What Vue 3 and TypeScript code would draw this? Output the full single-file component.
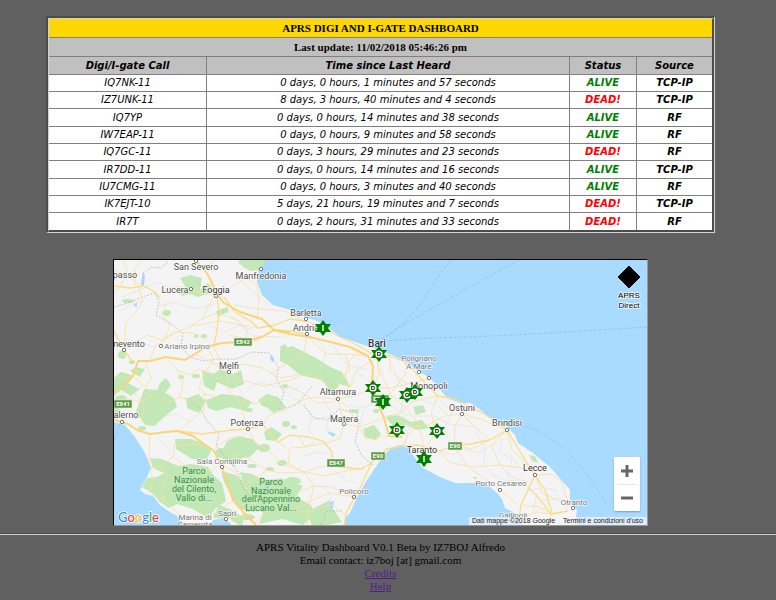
<script setup lang="ts">
import { ref } from 'vue'

interface Station {
  call: string
  heard: string
  alive: boolean
  source: 'TCP-IP' | 'RF'
}

interface Place {
  name: string
  x: number
  y: number
  dot?: [number, number]
  kind?: 'city' | 'capital' | 'minor' | 'park'
}

const stations: Station[] = [
  { call: 'IQ7NK-11', heard: '0 days, 0 hours, 1 minutes and 57 seconds', alive: true, source: 'TCP-IP' },
  { call: 'IZ7UNK-11', heard: '8 days, 3 hours, 40 minutes and 4 seconds', alive: false, source: 'TCP-IP' },
  { call: 'IQ7YP', heard: '0 days, 0 hours, 14 minutes and 38 seconds', alive: true, source: 'RF' },
  { call: 'IW7EAP-11', heard: '0 days, 0 hours, 9 minutes and 58 seconds', alive: true, source: 'RF' },
  { call: 'IQ7GC-11', heard: '0 days, 3 hours, 29 minutes and 23 seconds', alive: false, source: 'RF' },
  { call: 'IR7DD-11', heard: '0 days, 0 hours, 14 minutes and 16 seconds', alive: true, source: 'TCP-IP' },
  { call: 'IU7CMG-11', heard: '0 days, 0 hours, 3 minutes and 40 seconds', alive: true, source: 'RF' },
  { call: 'IK7EJT-10', heard: '5 days, 21 hours, 19 minutes and 7 seconds', alive: false, source: 'TCP-IP' },
  { call: 'IR7T', heard: '0 days, 2 hours, 31 minutes and 33 seconds', alive: false, source: 'RF' },
]

const places: Place[] = [
  { name: 'San Severo', x: 196, y: 270, dot: [196, 261] },
  { name: 'Manfredonia', x: 261, y: 279, dot: [261, 269] },
  { name: 'passo', x: 125, y: 278 },
  { name: 'Lucera', x: 175, y: 293, dot: [191, 289] },
  { name: 'Foggia', x: 216, y: 293, dot: [216, 296], kind: 'city' },
  { name: 'nevento', x: 129, y: 347, dot: [124, 350] },
  { name: 'Ariano Irpino', x: 187, y: 349, dot: [161, 346], kind: 'minor' },
  { name: 'Melfi', x: 229, y: 369, dot: [229, 372] },
  { name: 'Barletta', x: 306, y: 316, dot: [306, 319] },
  { name: 'Andria', x: 306, y: 331, dot: [307, 334] },
  { name: 'Bari', x: 377, y: 347, kind: 'capital' },
  { name: 'Polignano', x: 419, y: 361, kind: 'minor' },
  { name: 'A Mare', x: 419, y: 369, dot: [419, 372], kind: 'minor' },
  { name: 'Monopoli', x: 429, y: 389, dot: [429, 378] },
  { name: 'Altamura', x: 338, y: 395, dot: [338, 399] },
  { name: 'Matera', x: 344, y: 422, dot: [344, 424] },
  { name: 'Ostuni', x: 462, y: 411, dot: [462, 414] },
  { name: 'Brindisi', x: 507, y: 426, dot: [507, 430] },
  { name: 'Taranto', x: 422, y: 453, kind: 'city' },
  { name: 'Lecce', x: 535, y: 471, dot: [535, 475], kind: 'city' },
  { name: 'Porto Cesareo', x: 501, y: 486, dot: [500, 490], kind: 'minor' },
  { name: 'Otranto', x: 574, y: 505, dot: [573, 508], kind: 'minor' },
  { name: 'Gallipoli', x: 513, y: 518, kind: 'minor' },
  { name: 'alerno', x: 126, y: 418, dot: [122, 422] },
  { name: 'Potenza', x: 247, y: 426, dot: [248, 429] },
  { name: 'Sala Consilina', x: 222, y: 464, dot: [222, 467], kind: 'minor' },
  { name: 'Policoro', x: 354, y: 494, dot: [354, 497], kind: 'minor' },
  { name: 'Sapri', x: 227, y: 516, dot: [226, 519], kind: 'minor' },
  { name: 'Marina di', x: 195, y: 520, kind: 'minor' },
  { name: 'Camerota', x: 195, y: 527, kind: 'minor' },
  { name: 'Parco', x: 194, y: 474, kind: 'park' },
  { name: 'Nazionale', x: 194, y: 483, kind: 'park' },
  { name: 'del Cilento,', x: 194, y: 492, kind: 'park' },
  { name: 'Vallo di...', x: 194, y: 501, kind: 'park' },
  { name: 'Parco', x: 271, y: 485, kind: 'park' },
  { name: 'Nazionale', x: 271, y: 494, kind: 'park' },
  { name: "dell'Appennino", x: 271, y: 502, kind: 'park' },
  { name: 'Lucano Val...', x: 271, y: 511, kind: 'park' },
]

const shields = [
  { name: 'E842', x: 243, y: 342 },
  { name: 'E841', x: 123, y: 404 },
  { name: 'E843', x: 380, y: 399 },
  { name: 'E90', x: 378, y: 456 },
  { name: 'E90', x: 455, y: 446 },
  { name: 'E847', x: 336, y: 463 },
]

const markers = [
  { letter: 'I', x: 323, y: 328 },
  { letter: 'D', x: 379, y: 354 },
  { letter: 'D', x: 373, y: 388 },
  { letter: 'I', x: 383, y: 402 },
  { letter: 'C', x: 407, y: 395 },
  { letter: 'D', x: 415, y: 392 },
  { letter: 'D', x: 397, y: 430 },
  { letter: 'D', x: 437, y: 431 },
  { letter: 'I', x: 424, y: 459 },
]

const motorways = [
  'M194 260C202 266 207 272 210 279L217 294L224 303L240 312L262 319L274 330L290 334L310 337L330 342L350 347L368 356L373 366L372 384L378 404L384 418L389 436L402 437',
  'M114 392L125 385L133 376L138 361L150 361L166 357L185 360L195 354L206 347L222 343L243 342L262 337L274 330L290 332',
  'M114 420L128 424L137 430L150 434L166 432L178 431L193 436L204 444L214 451L221 464L227 482L233 500L246 515L256 525',
]
const trunks = [
  'M217 294L219 313L217 330L214 346', 'M224 297L235 312L252 322L258 328L275 325L290 319L305 321L322 327L340 337L361 347L374 355L390 356L403 361L414 371L425 383L438 396L455 399L473 408L491 418L507 430',
  'M114 331L124 350L132 361', 'M178 431L202 434L217 432L232 430L248 429L263 425L278 442L290 435L298 436L309 437L323 441L332 452L333 465L341 467L360 469L370 464',
  'M344 527L346 513L359 490L372 462L387 449L402 446L418 445L439 451L457 445L470 444L490 440L507 430L518 448L527 463L535 475',
  'M535 475L528 490L521 505L519 519', 'M528 487L538 497L551 514L568 511', 'M114 286L130 288L144 286L155 292L160 298',
  'M307 334L290 331L278 332', 'M535 475L545 490L552 512',
]
const roads = [
  'M114 271L128 275L138 284L143 301L137 310L126 323L124 350', 'M114 293L122 284L127 270L124 260', 'M135 285L135 269L143 260',
  'M191 289L175 286L160 292M216 296L200 292L191 289', 'M211 302L202 319L191 326L175 333L163 340L147 335L124 350',
  'M216 296L235 285L247 278L257 285L259 300L257 320', 'M194 260L203 269L216 260', 'M234 305L260 309L285 311L306 322',
  'M191 326L220 321L258 328M202 319L217 313', 'M150 360L155 347L163 340L174 332L193 333L207 340',
  'M145 361L151 378L146 386L151 397L166 404L180 397L191 401L206 394L217 397', 'M166 357L177 370L183 382L180 397',
  'M195 354L210 362L229 372L241 380L264 386L290 380L309 373', 'M214 346L220 361L229 372L227 388L239 401L248 429',
  'M229 372L242 364L262 368L280 378L298 375', 'M177 370L190 375L199 369L212 375L227 383',
  'M206 347L214 359L204 374L199 388L206 394L204 410L182 428', 'M229 335L257 341L262 337', 'M114 377L130 379L138 371',
  'M114 404L126 398L140 402L151 397', 'M133 376L143 385L135 394L144 405L142 422', 'M248 429L242 437L230 438L216 446',
  'M248 429L255 442L269 451L280 463L304 472L314 486L310 501L293 511L273 506L264 514',
  'M226 452L244 456L267 470L281 473L304 472', 'M263 425L269 415L286 410L299 401L315 397L338 399',
  'M239 401L255 404L268 398L286 410', 'M286 385L303 393L316 403L333 402L350 387L357 370L373 360', 'M338 399L357 395L373 388L379 374L377 360',
  'M338 399L344 424L360 427L384 418M344 424L340 439L325 443', 'M309 373L326 384L338 399L349 408L357 424L366 439L389 436',
  'M307 334L315 344L326 354L345 354L368 356M307 334L304 352L285 365L270 374', 'M345 354L350 370L338 382L338 399',
  'M377 362L384 380L390 394L407 409L418 423L424 446', 'M373 388L390 388L407 384L429 378', 'M384 418L400 413L412 402L428 398L438 396',
  'M438 396L431 413L437 432L427 446', 'M397 420L412 427L428 425L444 416L462 414', 'M462 414L455 427L454 445',
  'M462 414L475 427L490 440M462 414L480 419L507 430', 'M390 394L405 375L407 362', 'M402 446L408 435L418 423',
  'M439 451L450 463L475 467L500 465L535 470', 'M454 446L468 467L487 480L500 490L518 505', 'M500 465L512 477L528 482',
  'M507 430L512 450L522 459L535 475M535 475L551 474L562 482L566 497L573 508', 'M535 475L542 493L556 499L568 509M519 519L537 512L552 514',
  'M507 430L491 445L500 465M490 440L472 449L455 445', 'M522 505L539 507L551 513L548 525',
  'M290 448L305 447L314 442M304 472L319 467L333 465M304 472L325 476L350 470L365 469', 'M310 501L330 493L354 497L346 513M307 527L310 501M292 511L307 512L332 505L345 514',
  'M354 497L332 487L314 486L297 493', 'M150 434L149 460L151 468L162 466L174 456L174 445L204 444', 'M151 468L153 482L149 492L165 501L174 510L186 519L214 514L233 500',
  'M174 457L187 467L193 473L213 470L221 464', 'M162 466L167 479L161 489L165 501M214 514L221 522L226 519L246 515', 'M254 525L263 514L256 502L236 506',
  'M222 464L235 472L245 485L256 502M245 485L267 470', 'M278 442L290 450L288 463L304 472M299 436L305 447L325 443',
  'M164 340L170 326L162 315L167 303M219 313L239 321L247 330L246 341', 'M362 347L350 360L345 375L350 387M390 356L390 371L407 384',
]
const greens = [
  'M180 278L190 275L202 278L200 290L208 283L213 289L208 294L198 297L190 294L182 296L176 289L187 289Z', 'M246 255L281 255L266 267L260 270L251 271L243 267L238 262Z',
  'M280 350L292 346L304 352L316 358L330 367L342 372L350 387L340 384L332 394L322 380L300 375L288 365L280 361Z',
  'M114 378L121 372L132 375L128 383L139 389L131 396L121 390L114 396Z', 'M136 367L145 369L140 377L130 371Z',
  'M144 389L161 390L174 398L177 407L165 416L154 426L145 425L136 411L140 401Z', 'M160 383L166 378L171 385L166 392L157 391Z',
  'M202 370L214 374L220 369L233 374L241 370L244 384L232 389L217 382L214 391L204 386Z',
  'M206 400L222 394L240 396L252 402L245 411L231 407L216 411L208 408Z', 'M186 399L198 394L206 401L199 413L187 408Z',
  'M175 439L191 439L205 444L211 451L207 459L192 459L176 449Z', 'M150 458L162 459L178 466L191 464L208 467L214 476L222 483L226 501L216 508L208 518L193 509L177 504L169 508L160 502L151 492L142 487L147 478L157 477L164 473L153 468Z',
  'M227 441L238 436L252 439L260 447L250 457L242 458L234 467L222 458L223 449Z', 'M221 471L236 475L247 487L257 492L260 502L253 511L240 509L232 497L224 482Z',
  'M240 472L252 474L266 482L281 478L303 486L296 497L311 505L315 514L303 525L282 519L259 524L264 510L250 502L244 488Z',
  'M219 505L230 509L244 518L242 527L228 518L213 518Z', 'M258 400L267 394L278 397L286 407L274 413L266 407Z', 'M264 432L271 427L282 434L276 441L266 440Z',
  'M363 429L374 425L381 434L376 440L365 437Z', 'M386 418L398 415L411 422L422 420L429 428L417 430L406 425L393 426Z',
  'M413 407L423 405L426 412L416 415Z', 'M529 455L535 456L538 463L532 461Z', 'M280 347L285 344L291 353L283 356Z',
  'M112 434L116 430L122 439L117 445Z', 'M307 512L330 500L333 509L342 522L327 525L312 526Z', 'M216 311L227 307L229 311L218 317Z',
]
const woods: [number, number, number, number][] = [
  [128, 301, 6, 2], [167, 313, 4, 3], [204, 336, 3, 2], [196, 336, 2, 2], [122, 355, 4, 4], [132, 362, 3, 2],
  [121, 399, 6, 4], [181, 377, 3, 2], [196, 376, 4, 2], [236, 382, 6, 4], [249, 410, 4, 2], [267, 403, 7, 4],
  [286, 424, 4, 3], [264, 448, 6, 4], [294, 427, 3, 2], [222, 453, 7, 5], [282, 463, 5, 3], [270, 469, 4, 2],
  [293, 481, 8, 4], [376, 411, 3, 2], [354, 411, 5, 2], [391, 417, 4, 2], [417, 423, 4, 2], [475, 478, 2, 1],
  [115, 453, 5, 3], [116, 412, 4, 6], [142, 428, 4, 2], [252, 466, 5, 2], [174, 482, 6, 8], [247, 517, 8, 3],
  [287, 360, 4, 3], [285, 386, 3, 2],
]
const fields = [
  'M123 297L158 282L171 288M157 307L173 302L195 309L214 304', 'M240 280L258 296L273 309M227 312L252 336L286 337',
  'M211 326L224 332L240 325L252 330', 'M319 340L326 352L320 370M334 346L346 364L367 370', 'M275 381L289 395L299 401L311 415L309 430L317 440',
  'M247 389L260 382L281 388L298 389', 'M323 399L331 412L326 427L340 439M310 420L326 417L344 424', 'M357 372L370 382L374 399L363 411L360 427',
  'M391 363L400 384L418 399L437 405L448 415', 'M379 404L391 406L410 416L433 416L449 424L476 427', 'M404 393L401 411L409 426L405 445',
  'M441 402L452 412L445 427L449 443', 'M440 451L453 455L463 449L479 453L498 442', 'M476 433L485 449L484 465L497 480',
  'M502 438L499 452L512 459L508 478M509 453L522 470', 'M490 473L503 480L519 481M526 492L543 487L557 491', 'M537 493L533 513M542 500L562 499L570 505M551 488L561 500',
  'M303 456L319 452L333 455M334 471L346 480L356 483M320 484L331 495L328 506', 'M156 426L166 415L179 415L190 422M156 435L165 446L172 457',
  'M126 339L143 343L155 347M119 312L130 305L143 301', 'M211 363L221 364L229 372L240 390L246 404', 'M348 405L359 408L372 405M371 430L379 426L384 418',
]

const zoom = ref(8)
</script>

<template>
  <main class="page">
    <div class="frame">
      <div class="frame-inner">
        <table class="stations">
          <colgroup>
            <col class="col-call" />
            <col />
            <col class="col-status" />
            <col class="col-source" />
          </colgroup>
          <thead>
            <tr class="title"><th colspan="4">APRS DIGI AND I-GATE DASHBOARD</th></tr>
            <tr class="updated"><th colspan="4">Last update: 11/02/2018 05:46:26 pm</th></tr>
            <tr class="heads">
              <th scope="col">Digi/I-gate Call</th>
              <th scope="col">Time since Last Heard</th>
              <th scope="col">Status</th>
              <th scope="col">Source</th>
            </tr>
          </thead>
          <tbody>
            <tr v-for="s in stations" :key="s.call">
              <td>{{ s.call }}</td>
              <td>{{ s.heard }}</td>
              <td class="strong" :class="s.alive ? 'alive' : 'dead'">{{ s.alive ? 'ALIVE' : 'DEAD!' }}</td>
              <td class="strong">{{ s.source }}</td>
            </tr>
          </tbody>
        </table>
      </div>
    </div>

    <section class="map">
      <svg class="canvas" viewBox="114 260 533 265" preserveAspectRatio="xMidYMid slice">
        <rect x="100" y="250" width="560" height="290" fill="#f4f4f4" />
        <path v-for="g in greens" :key="g" :d="g" class="green" />
        <ellipse v-for="(w, i) in woods" :key="i" :cx="w[0]" :cy="w[1]" :rx="w[2]" :ry="w[3]" class="green" />
        <path v-for="f in fields" :key="f" :d="f" class="field" />
        <g class="water">
          <path d="M266 255L265 262L259 270L257 282L262 295L273 305L290 310L305 317L323 323L340 337L370 347L390 354L407 362L417 370L430 378L437 386L447 398L460 403L470 403L478 408L490 418L507 427L515 435L518 443L533 453L550 467L563 482L570 490L570 500L577 510L576 517L573 530H660V250H266Z" />
          <path d="M345 530L345 518L350 513L357 497L367 480L377 465L387 452L393 447L400 445L408 448L415 458L423 468L440 477L455 483L470 483L483 483L490 487L497 493L502 499L505 508L513 512L520 520L525 530Z" />
          <path d="M110 421L125 425L135 437L145 453L151 468L147 477L140 490L145 494L153 496L160 505L170 512L177 516L185 525V530H110Z" />
          <path d="M208 530L213 520L225 518L230 523L236 530Z" />
          <path d="M143 271L145 276L144 285L141 285Z M326 431L336 434L333 437Z M330 503L334 500L333 508L329 510Z M133 306L137 302V307Z M271 355L274 358L273 363L270 359Z M263 484L269 487L266 489Z" />
        </g>
        <g class="border">
          <path d="M114 307L131 302L145 296L155 293L159 302L156 315L170 323L183 333L181 347L190 357L203 361L218 359L236 359L252 352L269 353L279 368L276 378L284 392L279 410L298 404L307 392L312 386" />
          <path d="M142 285L143 274L151 267L161 268L168 262" />
          <path d="M185 398L201 409L207 421L219 434L216 446L229 461L238 472L243 488L252 499L245 507" />
          <path d="M304 405L314 418L328 420L339 409L351 412M357 412L359 425L355 441L362 456L373 465M342 511L327 511L321 525" />
        </g>
        <g class="ferry">
          <path d="M378 342L402 325L424 300L437 278L451 260M378 342L408 322L440 304L470 287L519 260M384 341L430 338L470 337L550 333L647 327M521 426Q565 434 606 503M114 440L120 424" />
        </g>
        <path v-for="r in roads" :key="r" :d="r" class="road" />
        <path v-for="t in trunks" :key="t" :d="t" class="trunk" />
        <path v-for="m in motorways" :key="m" :d="m" class="motorway" />
        <g v-for="(s, i) in shields" :key="'s' + i" class="shield">
          <rect :x="s.x - (s.name.length * 2 + 1)" :y="s.y - 4" :width="s.name.length * 4 + 2" height="8" />
          <text :x="s.x" :y="s.y + 2">{{ s.name }}</text>
        </g>
        <g v-for="(p, i) in places" :key="'p' + i" class="place" :class="p.kind">
          <circle v-if="p.dot" :cx="p.dot[0]" :cy="p.dot[1]" r="1.7" />
          <text :x="p.x" :y="p.y">{{ p.name }}</text>
        </g>
        <g v-for="(m, i) in markers" :key="'m' + i" class="marker" :transform="`translate(${m.x} ${m.y})`">
          <path d="M0-8L3-4H8L5 0L8 4H3L0 8L-3 4H-8L-5 0L-8-4H-3Z" fill="#008000" />
          <path v-if="m.letter === 'I'" d="M0-3V3" stroke="#fff" stroke-width="1.4" />
          <template v-else>
            <circle r="3.6" fill="#fff" />
            <text y="2">{{ m.letter }}</text>
          </template>
        </g>
        <g class="direct">
          <path d="M629 266L640 277L629 288L618 277Z" stroke="#000" stroke-linejoin="round" />
          <text x="629" y="298">APRS</text>
          <text x="629" y="308">Direct</text>
        </g>
        <text class="google" x="118" y="522"><tspan fill="#4285f4">G</tspan><tspan fill="#ea4335">o</tspan><tspan fill="#fbbc05">o</tspan><tspan fill="#4285f4">g</tspan><tspan fill="#34a853">l</tspan><tspan fill="#ea4335">e</tspan></text>
      </svg>
      <div class="zoom">
        <button type="button" aria-label="+" @click="zoom++">
          <svg viewBox="0 0 12 12"><path d="M0 6H12M6 0V12" /></svg>
        </button>
        <button type="button" aria-label="−" @click="zoom--">
          <svg viewBox="0 0 12 12"><path d="M0 6H12" /></svg>
        </button>
      </div>
      <div class="legal">
        <span>Dati mappe ©2018 Google</span>
        <a href="#terms">Termini e condizioni d'uso</a>
      </div>
    </section>
  </main>
  <hr class="rule" />
  <footer class="footer">
    <div>APRS Vitality Dashboard V0.1 Beta by IZ7BOJ Alfredo</div>
    <div>Email contact: iz7boj [at] gmail.com</div>
    <div><a href="#credits">Credits</a></div>
    <div><a href="#help">Help</a></div>
  </footer>
</template>

<style>
body {
  margin: 0;
  background: #606060;
}
</style>

<style scoped>
.page {
  padding: 16px 23px 0 8px;
}
.frame {
  box-sizing: border-box;
  width: 90%;
  max-width: 669px;
  margin: 0 auto;
  border: solid #4b4b4b;
  border-width: 2px 1px 1px 2px;
  border-right-color: #d2d2d2;
  border-bottom-color: #d2d2d2;
}
.frame-inner {
  border: solid #d2d2d2;
  border-width: 1px 2px 2px 1px;
  border-right-color: #4b4b4b;
  border-bottom-color: #4b4b4b;
}
.stations {
  width: 100%;
  table-layout: fixed;
  border-spacing: 0;
  background: #fff;
  font: italic 10px/16px "DejaVu Sans", Verdana, sans-serif;
  text-align: center;
  color: #000;
}
.col-call {
  width: 158px;
}
.col-status {
  width: 67px;
}
.col-source {
  width: 75px;
}
th,
td {
  box-sizing: border-box;
  height: 17px;
  padding: 0;
  border-right: 1px solid #808080;
  border-bottom: 1px solid #808080;
}
th:last-child,
td:last-child {
  border-right: 0;
}
tbody tr:nth-child(3n) td {
  height: 18px;
}
tbody tr:last-child td {
  height: 17px;
  border-bottom: 0;
}
.title th,
.updated th {
  height: 19px;
  font: bold 11px/18px "Liberation Serif", "Times New Roman", serif;
}
.title {
  background: #ffd700;
}
.updated,
.heads {
  background: #c0c0c0;
}
.heads th {
  height: 18px;
  font-size: 10px;
  line-height: 17px;
}
.strong {
  font-weight: bold;
}
.alive {
  color: #008000;
}
.dead {
  color: #f00;
}
.map {
  position: relative;
  box-sizing: border-box;
  width: 72%;
  max-width: 535px;
  margin: 26px auto 0;
  border: 1px solid #000;
  border-right-color: #999;
  border-bottom-color: #999;
  overflow: hidden;
}
.canvas {
  display: block;
  width: 100%;
  font-family: Roboto, sans-serif;
}
.canvas text {
  text-anchor: middle;
}
.green {
  fill: #c1e8b6;
}
.field {
  fill: none;
  stroke: #e2e2e2;
  stroke-width: 0.7;
}
.water {
  fill: #a9daff;
}
.border {
  fill: none;
  stroke: #b8b8bc;
  stroke-width: 0.8;
  stroke-dasharray: 2 1.5;
}
.ferry {
  fill: none;
  stroke: #92bfec;
  stroke-width: 0.8;
  stroke-dasharray: 3 2;
}
.road {
  fill: none;
  stroke: #fae0a0;
  stroke-width: 0.8;
  stroke-linejoin: round;
}
.trunk {
  fill: none;
  stroke: #fbdc87;
  stroke-width: 1.3;
  stroke-linejoin: round;
}
.motorway {
  fill: none;
  stroke: #f9d577;
  stroke-width: 2;
  stroke-linejoin: round;
}
.shield rect {
  fill: #5d9b48;
  stroke: #e9f1e4;
  stroke-width: 0.5;
}
.shield text {
  fill: #fff;
  font-size: 6px;
  font-weight: bold;
}
.place circle {
  fill: #fff;
  stroke: #666;
  stroke-width: 0.9;
}
.place text {
  fill: #4d4d4d;
  font-size: 9px;
  stroke: #fff;
  stroke-width: 1.5;
  stroke-linejoin: round;
  stroke-opacity: 0.8;
  paint-order: stroke;
}
.city text {
  fill: #333;
}
.capital text {
  fill: #333;
  font-size: 10px;
  font-weight: 500;
}
.minor text {
  fill: #777;
  font-size: 8px;
}
.park text {
  fill: #388e48;
  stroke: #c1e8b6;
}
.marker text {
  font: bold 6px "Liberation Sans", Arial, sans-serif;
}
.direct text {
  font: 8px "Liberation Sans", Arial, sans-serif;
  stroke: #fff;
  stroke-width: 2;
  stroke-linejoin: round;
  stroke-opacity: 0.7;
  paint-order: stroke;
}
.canvas .google {
  font: 500 13px Lato, sans-serif;
  text-anchor: start;
  stroke: #fff;
  stroke-width: 1.5;
  paint-order: stroke;
}
.zoom {
  position: absolute;
  right: 7px;
  bottom: 14px;
  display: flex;
  flex-direction: column;
  width: 26px;
  padding: 0 3px;
  box-sizing: border-box;
  background: #fff;
  border-radius: 1px;
  box-shadow: 0 1px 2px #0004;
}
.zoom button {
  display: grid;
  place-items: center;
  height: 27px;
  padding: 0;
  border: 0;
  background: none;
}
.zoom button + button {
  border-top: 1px solid #e6e6e6;
}
.zoom svg {
  width: 12px;
  height: 12px;
  stroke: #666;
  stroke-width: 3;
}
.legal {
  position: absolute;
  right: 0;
  bottom: 0;
  display: flex;
  gap: 8px;
  padding: 0 4px 0 3px;
  background: #f5f5f5b3;
  font: 7px/8px "Liberation Sans", Arial, sans-serif;
  color: #222;
  white-space: nowrap;
}
.legal a {
  color: #222;
  text-decoration: none;
}
.rule {
  margin: 7px 0 6px;
  border: solid;
  border-width: 1px 0;
  border-color: #4b4b4b #d2d2d2 #d2d2d2;
}
.footer {
  padding: 0 23px 0 8px;
  font: 11px/13px "Liberation Serif", "Times New Roman", serif;
  text-align: center;
  color: #000;
}
.footer a {
  color: #551a8b;
}
</style>
